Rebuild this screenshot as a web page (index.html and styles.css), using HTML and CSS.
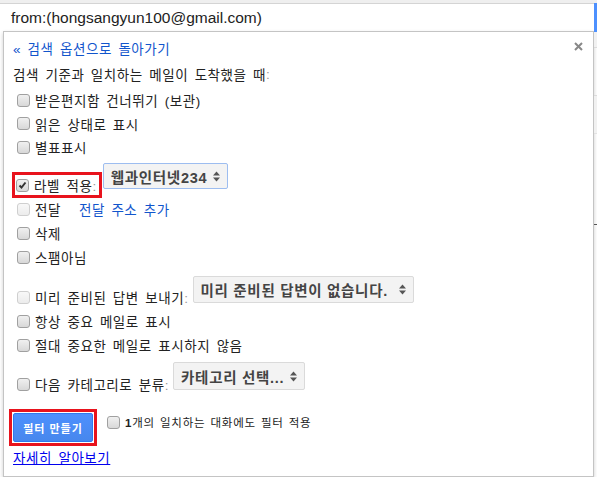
FILE: index.html
```html
<!DOCTYPE html>
<html lang="ko">
<head>
<meta charset="utf-8">
<title>필터 만들기</title>
<link rel="stylesheet" href="styles.css">
</head>
<body>
<div class="topstrip"></div>
<div class="main">
  <div class="left">
    <div class="search">from:(hongsangyun100@gmail.com)</div>
    <div class="panel">
      <div class="back">
        <a class="link" href="#">« 검색 옵션으로 돌아가기</a>
        <span class="close"><svg width="9" height="9" viewBox="0 0 9 9"><path d="M1 1L8 8M8 1L1 8" stroke="#888" stroke-width="2" fill="none"/></svg></span>
      </div>
      <div class="heading">검색 기준과 일치하는 메일이 도착했을 때<span class="colon">:</span></div>

      <div class="group g1">
        <div class="row"><span class="cb"></span><span>받은편지함 건너뛰기 (보관)</span></div>
        <div class="row"><span class="cb"></span><span>읽은 상태로 표시</span></div>
        <div class="row"><span class="cb"></span><span>별표표시</span></div>
      </div>

      <div class="group g2">
        <div class="row">
          <span class="redbox"><span class="cb checked"><svg width="11" height="11" viewBox="0 0 11 11"><path d="M2.5 5.5L4.5 7.5L8.5 2.5" stroke="#333" stroke-width="2" fill="none"/></svg></span><span>라벨 적용<span class="colon">:</span></span></span>
          <span class="select sel-label">웹과인터넷234<span class="arrows"><svg width="7" height="11" viewBox="0 0 7 11"><path d="M0 4.5L3.5 0.5L7 4.5Z M0 6.5L3.5 10.5L7 6.5Z" fill="#555"/></svg></span></span>
        </div>
        <div class="row"><span class="cb disabled"></span><span>전달</span><a class="link fwd" href="#">전달 주소 추가</a></div>
        <div class="row"><span class="cb"></span><span>삭제</span></div>
        <div class="row"><span class="cb"></span><span>스팸아님</span></div>
      </div>

      <div class="group g3">
        <div class="row">
          <span class="cb disabled"></span><span>미리 준비된 답변 보내기<span class="colon">:</span></span>
          <span class="select sel-reply">미리 준비된 답변이 없습니다.<span class="arrows"><svg width="7" height="11" viewBox="0 0 7 11"><path d="M0 4.5L3.5 0.5L7 4.5Z M0 6.5L3.5 10.5L7 6.5Z" fill="#555"/></svg></span></span>
        </div>
        <div class="row"><span class="cb"></span><span>항상 중요 메일로 표시</span></div>
        <div class="row"><span class="cb"></span><span>절대 중요한 메일로 표시하지 않음</span></div>
      </div>

      <div class="group g4">
        <div class="row">
          <span class="cb"></span><span>다음 카테고리로 분류<span class="colon">:</span></span>
          <span class="select sel-cat">카테고리 선택...<span class="arrows"><svg width="7" height="11" viewBox="0 0 7 11"><path d="M0 4.5L3.5 0.5L7 4.5Z M0 6.5L3.5 10.5L7 6.5Z" fill="#555"/></svg></span></span>
        </div>
      </div>

      <div class="actions">
        <span class="redbtn"><span class="btn">필터 만들기</span></span>
        <span class="also"><span class="cb"></span><span class="also-text"><b>1</b>개의 일치하는 대화에도 필터 적용</span></span>
      </div>

      <div class="more"><a class="learn" href="#">자세히 알아보기</a></div>
    </div>
  </div>
  <div class="right">
    <div class="blue"></div>
    <div class="bg-a"></div>
    <div class="bg-b"></div>
    <div class="bg-c"></div>
    <div class="bg-d"></div>
  </div>
</div>
</body>
</html>
```

FILE: styles.css
```css
html, body {
  margin: 0;
  padding: 0;
  background: #fff;
}
body {
  font-family: "Liberation Sans", "Noto Sans CJK KR", sans-serif;
  font-size: 13.5px;
  color: #222;
  letter-spacing: 0.55px;
  word-spacing: 2.2px;
}
.topstrip {
  height: 3px;
  background: #efefef;
}
.main {
  display: flex;
}
.left {
  width: 594px;
}
.right {
  width: 3px;
  display: flex;
  flex-direction: column;
}
.search {
  height: 27px;
  border-top: 1px solid #d4d4d4;
  padding-left: 11px;
  display: flex;
  align-items: center;
  font-size: 15.5px;
  letter-spacing: 0;
  word-spacing: 0;
  color: #222;
}
.panel {
  box-sizing: border-box;
  margin-left: 3px;
  width: 591px;
  border: 1px solid #c4c4c4;
  box-shadow: 0 2px 4px rgba(0,0,0,0.2);
  padding: 4px 10px 10px 9px;
  background: #fff;
}
.link {
  color: #1155cc;
  text-decoration: none;
}
.back {
  height: 24px;
  display: flex;
  align-items: center;
  justify-content: space-between;
}
.close {
  display: flex;
  margin-top: -3px;
}
.heading {
  height: 24px;
  margin-top: 2px;
  display: flex;
  align-items: center;
}
.colon {
  color: #999;
}
.group {
  display: flex;
  flex-direction: column;
}
.g1 { margin-top: 2px; }
.g2 { margin-top: 14px; }
.g3 { margin-top: 16px; }
.g4 { margin-top: 15px; }
.row {
  height: 24px;
  display: flex;
  align-items: center;
  padding-left: 4px;
}
.g1 .row:nth-child(2) { height: 23px; }
.cb {
  box-sizing: border-box;
  width: 13px;
  height: 13px;
  border: 1px solid #a0a0a0;
  border-radius: 3px;
  background: linear-gradient(#f0f0f0, #d8d8d8);
  margin-right: 5px;
  flex: none;
  display: flex;
  align-items: center;
  justify-content: center;
}
.cb.disabled {
  border-color: #cfcfcf;
  background: linear-gradient(#f8f8f8, #ececec);
}
.cb.checked svg {
  display: block;
}
.redbox {
  display: flex;
  align-items: center;
  height: 20px;
  border: 3px solid #e8131d;
  margin-left: -5px;
  padding: 0 2px 0 1px;
  margin-right: 1px;
}
.select {
  box-sizing: border-box;
  display: flex;
  align-items: center;
  justify-content: space-between;
  font-size: 14.5px;
  font-weight: bold;
  color: #444;
  letter-spacing: 0.7px;
  word-spacing: 0;
  background: #f3f3f3;
  border: 1px solid #dadada;
  border-radius: 2px;
  padding: 0 7px 0 7px;
}
.arrows {
  display: flex;
  margin-left: 4px;
}
.sel-label {
  width: 125px;
  height: 26px;
  border-color: #9dbdf0;
  margin-bottom: 18px;
}
.sel-reply {
  width: 221px;
  height: 27px;
  margin-left: 4px;
  margin-bottom: 15px;
}
.sel-cat {
  width: 132px;
  height: 28px;
  margin-left: 4px;
  margin-bottom: 16px;
}
.fwd {
  margin-left: 18px;
}
.actions {
  margin-top: 13px;
  display: flex;
  align-items: center;
  margin-left: -4px;
}
.redbtn {
  display: flex;
  border: 3px solid #e8131d;
  padding: 1px;
}
.btn {
  box-sizing: border-box;
  width: 80px;
  height: 29px;
  display: flex;
  align-items: center;
  justify-content: center;
  background: linear-gradient(#4d90fe, #4787ed);
  border: 1px solid #3079ed;
  border-radius: 2px;
  color: #fff;
  font-weight: bold;
  font-size: 11px;
  letter-spacing: 1px;
  word-spacing: 0;
}
.also {
  display: flex;
  align-items: center;
  margin-left: 10px;
  margin-bottom: 11px;
}
.also-text {
  font-size: 11.5px;
  letter-spacing: 0.8px;
  word-spacing: 1px;
}
.more {
  margin-top: 2px;
  height: 18px;
  display: flex;
  align-items: center;
}
.learn {
  color: #0000ee;
  text-decoration: underline;
}
.blue {
  height: 29px;
  background: #4d90fe;
}
.bg-a {
  height: 15px;
  background: #f1f1f1;
  border-bottom: 1px solid #dcdcdc;
}
.bg-b {
  height: 47px;
  border-bottom: 1px solid #dcdcdc;
}
.bg-c {
  height: 37px;
  background: #f1f1f1;
  border-bottom: 1px solid #e2e2e2;
}
.bg-d {
  height: 90px;
  border-bottom: 1px solid #555;
}
```
